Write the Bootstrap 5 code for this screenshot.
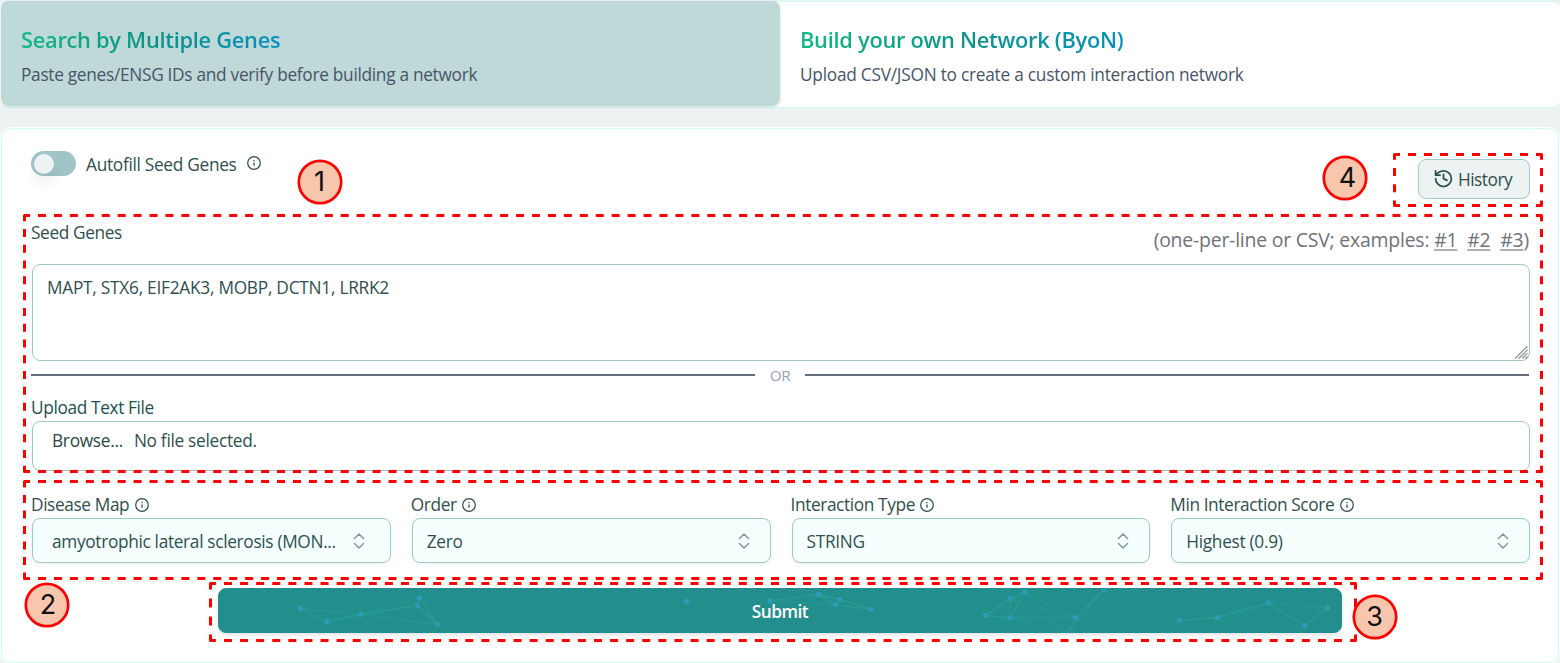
<!DOCTYPE html>
<html lang="en">
<head>
<meta charset="utf-8">
<meta name="viewport" content="width=device-width, initial-scale=1">
<title>Search by Multiple Genes</title>
<link href="https://cdn.jsdelivr.net/npm/bootstrap@5.3.0/dist/css/bootstrap.min.css" rel="stylesheet">
<style>
  body { background: #edf3f3; color: #2f4f4f; font-family: "Open Sans", sans-serif; font-size: 17.3px; line-height: 24px; letter-spacing: -.3px; height: 663px; overflow: hidden; position: relative; }
  .mode-tabs { margin-top: 1px; height: 107px; background: #fff; border: 1px solid #ccfbf1; border-left-color: #fff; border-right-color: #fff; border-radius: 8px; }
  .mode-tab { width: 779px; height: 105px; padding: 23.5px 20px; border-radius: 8px; color: #475569; }
  .mode-tab.active { background: #bfd8d8; margin-top: -1px; padding-top: 24.5px; box-shadow: 0 1px 3px rgba(0,0,0,.15); }
  .mode-title { font-size: 21.8px; line-height: 28px; font-weight: 600; letter-spacing: -.27px; margin: 0 0 9.5px; width: max-content; background: linear-gradient(90deg, #10b981, #0d9488 50%, #0891b2 90%, #0e8fbd); -webkit-background-clip: text; background-clip: text; color: transparent; }
  .panel { margin: 20px 1px 0; height: 535px; background: #fff; border: 1px solid #ccfbf1; border-radius: 12px; box-shadow: 0 0 0 1px #fff; padding: 22px 28px 0 29px; }
  .toggle-track { width: 45px; height: 25px; background: #9fc5c7; border-radius: 13px; padding: 2.5px; }
  .toggle-knob { width: 20px; height: 20px; border-radius: 50%; background: #edf3f3; box-shadow: 0 10px 15px rgba(0,0,0,.08); }
  .btn-history { --bs-btn-color: #2f4f4f; --bs-btn-bg: #edf3f3; --bs-btn-border-color: #9fc8c8; width: 112px; height: 40px; margin-top: 8px; padding: 1px 0 0 14px; border-radius: 8px; font-size: 17.3px; line-height: 24px; letter-spacing: -.5px; }
  .seed-row { height: 65px; padding-top: 21.5px; }
  .seed-hint { font-size: 19.4px; letter-spacing: -.2px; color: #71717a; margin: 7.5px 1px 0 0; }
  .seed-hint a { color: inherit; text-decoration: underline; text-decoration-color: #aeb0b6; text-decoration-thickness: 2px; text-underline-offset: 2px; margin-left: 5px; }
  .seed-hint a:first-of-type { margin-left: 0; }
  .field { border: 1px solid #9fc8c8; border-radius: 8px; margin-left: 1px; background: #fff; }
  textarea.field { display: block; width: calc(100% - 1px); height: 97px; padding: 10.5px 14px; color: #2f4f4f; resize: none; outline: 0; letter-spacing: -.255px; line-height: 24px; }
  .grip { position: absolute; right: 2px; bottom: 2px; }
  .or-row { height: 29px; gap: 15px; font-size: 15.3px; color: #94a3b8; padding: 0 1px 2px 0; }
  .or-row i { height: 2px; background: #64707d; flex: 1; }
  .upload-label { color: #1d4f4f; margin-top: 6px; margin-bottom: 1px; letter-spacing: -.37px; }
  .file-box { height: 50px; padding: 6.5px 19px; }
  .file-box b { font-weight: 500; margin-right: 11px; color: #2b4646; }
  .options { display: grid; grid-template-columns: repeat(4, 1fr); column-gap: 20px; margin-top: 21.5px; }
  .option-label { letter-spacing: -.39px; gap: 5.5px; height: 25.5px; margin-bottom: 0; }
  .picker { height: 45px; padding: 0 20px 0 14px; background: #f5fffe; box-shadow: 0 2px 4px rgba(0,0,0,.05); }
  .picker span { padding-top: 2px; }
  .picker.wide { padding: 0 25px 0 19px; }
  .btn-submit { --bs-btn-color: #fff; --bs-btn-bg: #238f8d; --bs-btn-border-color: #238f8d; width: 1124px; height: 45px; margin: 25px 0 0 187px; border-radius: 8px; font-weight: 600; font-size: 17.3px; letter-spacing: -.5px; overflow: hidden; position: relative; box-shadow: 0 2px 4px rgba(0,0,0,.12); padding: 2px 0 0; }
  .net { position: absolute; left: -1px; top: -1px; }
  .callouts { position: absolute; left: 0; top: 0; pointer-events: none; font-family: Inter, sans-serif; letter-spacing: 0; }
</style>
</head>
<body>
<svg width="0" height="0" class="position-absolute">
  <symbol id="info" viewBox="0 0 14 14"><circle cx="7" cy="7" r="6.3" fill="none" stroke="#2f4f4f" stroke-width="1.25"/><path d="M7 6.4v3.4M7 3.9v1.3" stroke="#2f4f4f" stroke-width="1.3"/></symbol>
  <symbol id="updown" viewBox="0 0 12 16"><path d="M1.5 5.5 6 1l4.5 4.5M1.5 10.5 6 15l4.5-4.5" fill="none" stroke="#83999a" stroke-width="1.5" stroke-linecap="round" stroke-linejoin="round"/></symbol>
</svg>

<nav class="mode-tabs d-flex">
  <div class="mode-tab active"><h2 class="mode-title">Search by Multiple Genes</h2><div>Paste genes/ENSG IDs and verify before building a network</div></div>
  <div class="mode-tab"><h2 class="mode-title">Build your own Network (ByoN)</h2><div style="letter-spacing:-.25px">Upload CSV/JSON to create a custom interaction network</div></div>
</nav>

<main class="panel">
  <div class="d-flex justify-content-between align-items-start">
    <div class="d-flex align-items-start">
      <div class="toggle-track"><div class="toggle-knob"></div></div>
      <span style="margin:1.5px 10px 0">Autofill Seed Genes</span>
      <svg width="14" height="14" style="margin-top:5px"><use href="#info"/></svg>
    </div>
    <button class="btn btn-history d-flex align-items-center gap-1">
      <svg width="21" height="21" viewBox="0 1 24 24" fill="none" stroke="#2f4f4f" stroke-width="2" stroke-linecap="round" stroke-linejoin="round"><path d="M3 12a9 9 0 1 0 9-9 9.75 9.75 0 0 0-6.74 2.74L3 8"/><path d="M3 3v5h5"/><path d="M12 7v5l4 2"/></svg>
      History
    </button>
  </div>

  <div class="seed-row d-flex justify-content-between align-items-start">
    <label for="genes" style="letter-spacing:-.39px">Seed Genes</label>
    <div class="seed-hint">(one-per-line or CSV; examples: <a href="#1">#1</a> <a href="#2">#2</a> <a href="#3">#3</a>)</div>
  </div>
  <div class="position-relative">
    <textarea id="genes" class="field" spellcheck="false">MAPT, STX6, EIF2AK3, MOBP, DCTN1, LRRK2</textarea>
    <svg class="grip" width="13" height="13" viewBox="0 0 13 13" stroke="#858585" stroke-width="1.1"><path d="M0 12.5 12.5 0M3.7 12.5l8.8-8.8M7.2 12.5l5.3-5.3M10.5 12.5l2-2"/></svg>
  </div>

  <div class="or-row d-flex align-items-center"><i></i><span>OR</span><i></i></div>

  <div class="upload-label">Upload Text File</div>
  <div class="field file-box"><b>Browse...</b>No file selected.</div>

  <div class="options">
    <div>
      <div class="option-label d-flex align-items-center">Disease Map <svg width="14" height="14"><use href="#info"/></svg></div>
      <div class="field picker wide d-flex align-items-center justify-content-between"><span style="letter-spacing:-.33px">amyotrophic lateral sclerosis (MON...</span><svg width="12" height="16"><use href="#updown"/></svg></div>
    </div>
    <div>
      <div class="option-label d-flex align-items-center">Order <svg width="14" height="14"><use href="#info"/></svg></div>
      <div class="field picker d-flex align-items-center justify-content-between"><span>Zero</span><svg width="12" height="16"><use href="#updown"/></svg></div>
    </div>
    <div>
      <div class="option-label d-flex align-items-center">Interaction Type <svg width="14" height="14"><use href="#info"/></svg></div>
      <div class="field picker d-flex align-items-center justify-content-between"><span>STRING</span><svg width="12" height="16"><use href="#updown"/></svg></div>
    </div>
    <div>
      <div class="option-label d-flex align-items-center">Min Interaction Score <svg width="14" height="14"><use href="#info"/></svg></div>
      <div class="field picker d-flex align-items-center justify-content-between"><span>Highest (0.9)</span><svg width="12" height="16"><use href="#updown"/></svg></div>
    </div>
  </div>

  <button class="btn btn-submit d-block">
    <svg class="net" width="1124" height="45" viewBox="218 588 1124 45">
      <g fill="none" stroke="#28a294" stroke-width="1.3">
        <path opacity=".75" d="M300.5 608.5 327 621.5 360.500 614.500 417.500 605.500 437.500 624.500 419.500 597.500M417.500 605.500 419.500 597.500M770 601 818.500 594.500 835 604.500 840 599.500 871.500 609.500 835 604.500M818.500 594.500 840 599.500M985.500 615.500 1010 598.500 1025 592M985.500 615.500 1010 618M1010 598.500V618L1025 592M1103.500 590 1076 617.500 1068 633M1179.500 620.500 1217.500 617.500 1268.500 603 1304.500 625.500 1327.500 608"/>
        <path opacity=".4" d="M300.500 608.500 360.500 614.500 419.500 597.500M360.500 614.500 437.500 624.500M770 601 835 604.500M985.500 615.500 1025 592 1076 617.500H1010L1068 633 1010 598.500 1076 617.500M1025 592 1068 633 1103.500 590M1268.500 603 1327.500 608"/>
        <path opacity=".15" d="M686.500 601.500H770M1103.500 590 1179.500 620.500M1217.500 617.500 1304.500 625.500"/>
      </g>
      <g fill="#2a9db5"><circle cx="300.500" cy="608.500" r="2.700"/><circle cx="327" cy="621.500" r="2.700"/><circle cx="360.500" cy="614.500" r="2.700"/><circle cx="417.500" cy="605.500" r="2.700"/><circle cx="419.500" cy="597.800" r="2.700"/><circle cx="437.500" cy="624.500" r="2.700"/><circle cx="686.500" cy="601.500" r="2.700"/><circle cx="770.300" cy="601" r="2.700"/><circle cx="818.500" cy="594.500" r="2.700"/><circle cx="835.300" cy="604.500" r="2.700"/><circle cx="840" cy="599.500" r="2.700"/><circle cx="871.300" cy="609.500" r="2.700"/><circle cx="985.500" cy="615.500" r="2.700"/><circle cx="1010" cy="598.200" r="2.700"/><circle cx="1025" cy="592.300" r="2.700"/><circle cx="1010" cy="618" r="2.700"/><circle cx="1076" cy="617.500" r="2.700"/><circle cx="1103.500" cy="589.500" r="2.700"/><circle cx="1068" cy="634" r="2.700"/><circle cx="1179.500" cy="620.500" r="2.700"/><circle cx="1217.500" cy="617.500" r="2.700"/><circle cx="1268.500" cy="602.800" r="2.700"/><circle cx="1304.700" cy="625.700" r="2.700"/><circle cx="1327.300" cy="608" r="2.700"/></g>
    </svg>
    <span class="position-relative">Submit</span>
  </button>
</main>

<svg class="callouts" width="1560" height="663">
  <g stroke="#f00" stroke-width="3" fill="none">
    <!-- seed genes and upload -->
    <path d="M24.500 215.500H1541.500M24.500 471.500H1541.500" stroke-dasharray="8 7.935" stroke-dashoffset="2.435"/>
    <path d="M24.500 215.500V471.500M1541.500 215.500V471.500" stroke-dasharray="8 7.786" stroke-dashoffset="2.300"/>
    <!-- options -->
    <path d="M24.500 481.500H1541.500M24.500 578.500H1541.500" stroke-dasharray="8 7.935" stroke-dashoffset="2.435"/>
    <path d="M24.500 481.500V578.500M1541.500 481.500V578.500" stroke-dasharray="8 7.500" stroke-dashoffset="2"/>
    <!-- submit -->
    <path d="M210.500 583.500H1355.500M210.500 640.500H1355.500" stroke-dasharray="8 8.087" stroke-dashoffset="2.587"/>
    <path d="M210.500 583.500V640.500M1355.500 583.500V640.500" stroke-dasharray="9 9" stroke-dashoffset="3"/>
    <!-- history -->
    <path d="M1394.500 154.500H1541.500M1394.500 205.500H1541.500" stroke-dasharray="8 8" stroke-dashoffset="2.500"/>
    <path d="M1394.500 154.500V205.500M1541.500 154.500V205.500" stroke-dasharray="8 8.300" stroke-dashoffset="2.800"/>
  </g>
  <g fill="#f00"><circle cx="24.500" cy="215.500" r="1.500"/><circle cx="1541.500" cy="215.500" r="1.500"/><circle cx="24.500" cy="471.500" r="1.500"/><circle cx="1541.500" cy="471.500" r="1.500"/><circle cx="24.500" cy="481.500" r="1.500"/><circle cx="1541.500" cy="481.500" r="1.500"/><circle cx="24.500" cy="578.500" r="1.500"/><circle cx="1541.500" cy="578.500" r="1.500"/><circle cx="210.500" cy="583.500" r="1.500"/><circle cx="1355.500" cy="583.500" r="1.500"/><circle cx="210.500" cy="640.500" r="1.500"/><circle cx="1355.500" cy="640.500" r="1.500"/><circle cx="1394.500" cy="154.500" r="1.500"/><circle cx="1541.500" cy="154.500" r="1.500"/><circle cx="1394.500" cy="205.500" r="1.500"/><circle cx="1541.500" cy="205.500" r="1.500"/></g>
  <g fill="#f7c6ac" stroke="#f00" stroke-width="2.700"><circle cx="320" cy="182" r="21.200"/><circle cx="47" cy="605" r="21.200"/><circle cx="1375" cy="617" r="21.200"/><circle cx="1345" cy="178" r="21.200"/></g>
  <g fill="#111" font-size="27" text-anchor="middle"><text x="319.500" y="191">1</text><text x="48" y="614">2</text><text x="1374.500" y="626">3</text><text x="1347.500" y="187">4</text></g>
</svg>
<script src="https://cdn.jsdelivr.net/npm/bootstrap@5.3.0/dist/js/bootstrap.bundle.min.js"></script>
</body>
</html>
